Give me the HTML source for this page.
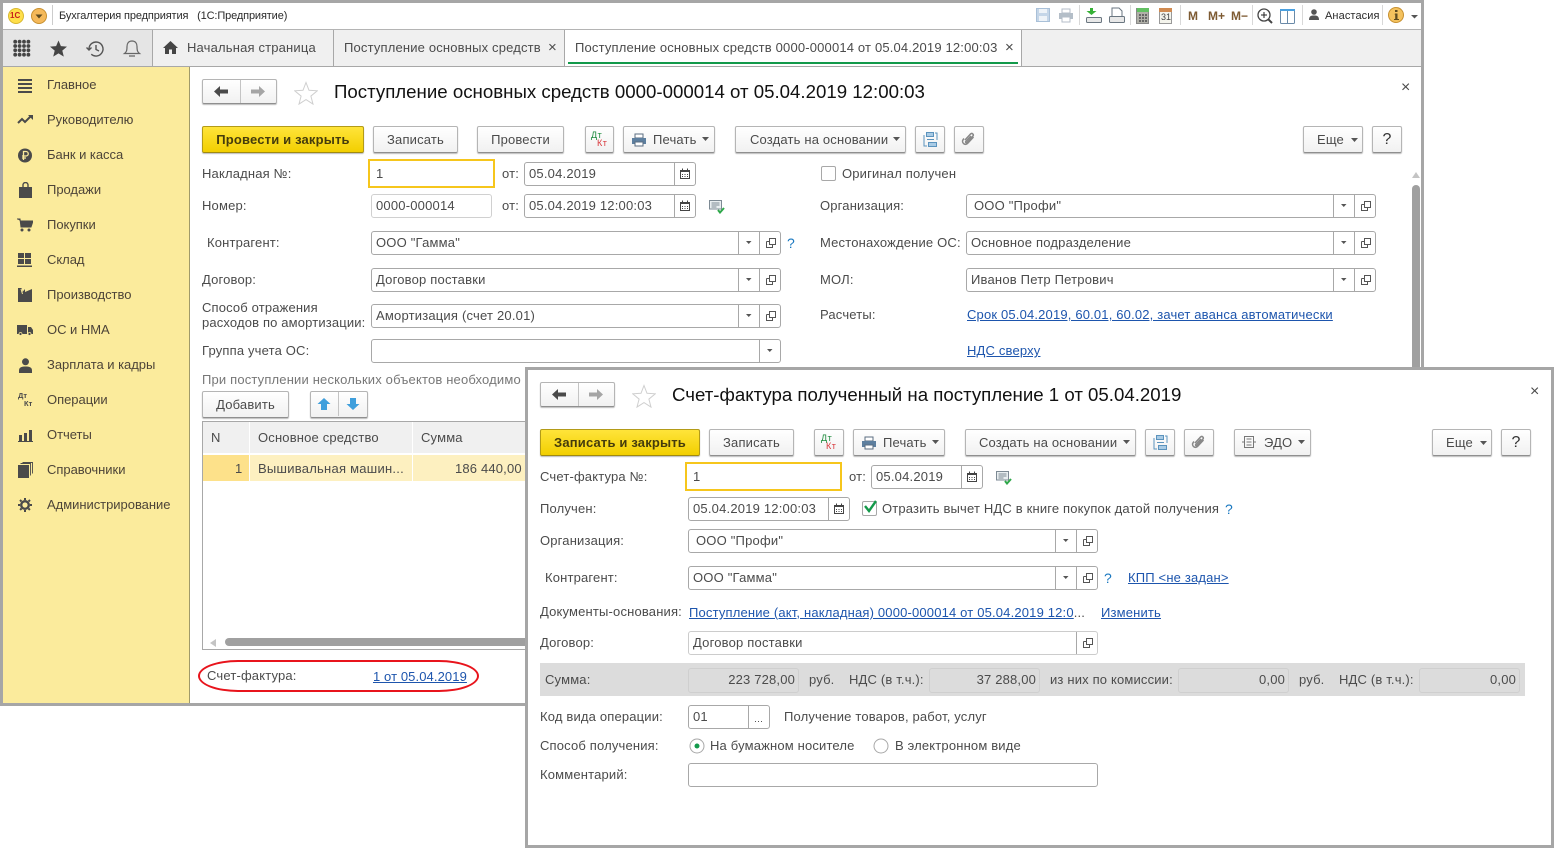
<!DOCTYPE html>
<html lang="ru"><head><meta charset="utf-8"><title>1С</title>
<style>
*{box-sizing:border-box}
html,body{margin:0;padding:0;background:#fff}
body{width:1554px;height:848px;position:relative;overflow:hidden;font:13px/16px "Liberation Sans",Arial,sans-serif;color:#4b4b4b;letter-spacing:.17px}
.a,.t,.b,.f,svg.i{position:absolute}
.t{white-space:nowrap;height:16px;line-height:16px;margin-top:1px}
.l{color:#1d55ad;text-decoration:underline}
.q{color:#1a78c0;font-weight:normal;font-size:14px}
.b{height:27px;border:1px solid #b5b5b5;border-bottom:1px solid #8f8f8f;border-radius:2px;background:linear-gradient(#fff,#f1f1f1);box-shadow:0 1px 1px #bbb;text-align:center;line-height:25px;white-space:nowrap;color:#4b4b4b}
.y{background:linear-gradient(#ffe43a,#f2cf00);border:1px solid #b39b18;border-bottom:1px solid #a08a10;font-weight:bold;color:#453c0c}
.f{height:24px;border:1px solid #a8a8a8;border-radius:3px;background:#fff;line-height:22px;padding-left:4px;white-space:nowrap;color:#4b4b4b;overflow:hidden;letter-spacing:.2px}
.f svg{position:absolute;top:0;right:0}
.g{height:25px;border:1px solid #cfcfcf;background:#dcdcdc;text-align:right;padding:0 3px 0 0;line-height:22px;letter-spacing:.17px}
.yf{border:2px solid #f6c61c;border-radius:0;height:29px;line-height:25px;padding-left:6px}
.s{width:15px;height:15px;border:1px solid #a8a8a8;border-radius:2px;background:#fff}
.m{position:absolute;left:47px;white-space:nowrap;height:16px;line-height:16px;color:#4d4438;letter-spacing:-.03px}
svg.n{position:absolute;left:17px}
.sep{position:absolute;width:1px;height:20px;top:5px;background:#d8d8d8}
.tb{font:11px/16px "Liberation Sans",sans-serif;letter-spacing:-.13px;color:#2a2a2a;margin-top:0}
.mm{font-weight:bold;color:#7d5a32;font-size:12px;letter-spacing:0;margin-top:0}
.h{height:24px;font-size:18.67px;line-height:24px;color:#111;letter-spacing:0;margin-top:0}
.dk{font-size:9px;letter-spacing:.5px;margin-top:0;height:10px;line-height:10px}
</style></head><body>
<svg width="0" height="0" style="position:absolute">
<defs>
<symbol id="ddo" viewBox="0 0 43 22"><path d="M1.500 0V22M22.500 0V22" stroke="#a8a8a8"/><path d="M9 9h5.500l-2.750 3z" fill="#555"/><path d="M29.500 9.500v6h6v-2.500M29.500 9.500H32M32.500 6.500h6v6h-6z" fill="none" stroke="#555"/></symbol>
<symbol id="dd" viewBox="0 0 22 22"><path d="M1.500 0V22" stroke="#a8a8a8"/><path d="M9 9h5.500l-2.750 3z" fill="#555"/></symbol>
<symbol id="o" viewBox="0 0 22 22"><path d="M1.500 0V22" stroke="#a8a8a8"/><path d="M8.500 9.500v6h6v-2.500M8.500 9.500H11M11.500 6.500h6v6h-6z" fill="none" stroke="#555"/></symbol>
<symbol id="cal" viewBox="0 0 22 22"><path d="M1.500 0V22" stroke="#a8a8a8"/><path d="M7.500 7.500h9v8h-9z" fill="#fff" stroke="#444"/><path d="M7 7h10v2H7zM9 5.500h1v2H9zM14 5.500h1v2h-1z" fill="#444"/><path d="M9 11h1v1H9zM11.500 11h1v1h-1zM14 11h1v1h-1zM9 13h1v1H9zM11.500 13h1v1h-1zM14 13h1v1h-1z" fill="#444"/></symbol>
<symbol id="star" viewBox="0 0 24 24"><path d="M12 1.500l3 7.800 8.300.5-6.400 5.300 2.100 8-7-4.500-7 4.500 2.100-8L.7 9.800 9 9.300z" fill="#fff" stroke="#cfcfcf"/></symbol>
<symbol id="note" viewBox="0 0 16 14"><path d="M.5.500h12v8.500h-12z" fill="#e9eef0" stroke="#7d8a94"/><path d="M2.500 3h8M2.500 5h8M2.500 7h5" stroke="#7d8a94"/><path d="M9 10l2 2.500 4-4.500" fill="none" stroke="#2fa84a" stroke-width="2"/></symbol>
<symbol id="al" viewBox="0 0 14 11"><path d="M6 0v3.500h8v4H6V11L0 5.500z" fill="#4a4a4a"/></symbol>
<symbol id="ar" viewBox="0 0 14 11"><path d="M8 0v3.500H0v4h8V11l6-5.500z" fill="#a5a5a5"/></symbol>
<symbol id="pr" viewBox="0 0 16 14"><path d="M4 1h8v4H4z" fill="#fff" stroke="#5b6d80"/><path d="M1 5h14v6H1z" fill="#5d7f9f"/><path d="M4 9h8v4H4z" fill="#fff" stroke="#5b6d80"/></symbol>
<symbol id="str" viewBox="0 0 15 15"><path d="M3.500 .5h7v4h-7zM5.500 10.500h8v4h-8z" fill="#a9cbe5" stroke="#5b93bd"/><path d="M1 3v11h3M14 8V1h-2M4 7.500h7" fill="none" stroke="#5b93bd"/></symbol>
<symbol id="clip" viewBox="0 0 16 16"><path d="M4 9l5.500-6c1.500-1.500 3.800.5 2.300 2.200L6 11.500c-.8.800-1.900-.2-1.200-1L10 5M3 7.500l-.8 1c-2.200 3 1.800 6.500 4.300 4l6-6.500" fill="none" stroke="#888" stroke-width="1.500"/></symbol>
</defs></svg>

<!-- main window -->
<div class="a" style="left:0;top:0;width:1424px;height:706px;border:3px solid #a6a6a6;background:#fff"></div>

<!-- title bar -->
<svg class="i" style="left:8px;top:8px" width="40" height="17" viewBox="0 0 40 17"><circle cx="8" cy="8" r="7.500" fill="#ffdf4a" stroke="#d8b830"/><circle cx="31" cy="8" r="7.500" fill="#f5b95a" stroke="#c79030"/><path d="M27.500 6.500h7L31 10.500z" fill="#5d4a20"/></svg>
<div class="t" style="left:10px;top:7px;font:bold 8px/16px 'Liberation Sans',sans-serif;color:#c8201c;letter-spacing:0">1С</div>
<div class="a" style="left:52px;top:5px;width:1px;height:20px;background:#ccc"></div>
<div class="t tb" style="left:59px;top:8px">Бухгалтерия предприятия &nbsp; (1С:Предприятие)</div>
<svg class="i" style="left:1034px;top:6px" width="272" height="20" viewBox="0 0 272 20">
<path d="M2.500 2.500h13v13h-13z" fill="#c5d6e8" stroke="#a9c0d8"/><path d="M5 3h8v4H5zM5 10h8v5H5z" fill="#eef3f8"/>
<path d="M28 3h8v4h-8z" fill="#fff" stroke="#b4bec8"/><rect x="25" y="7" width="14" height="6" fill="#b4bec8"/><path d="M28 11h8v5h-8z" fill="#fff" stroke="#b4bec8"/>
<path d="M56 2v3h-3.500l5 4 5-4H59V2z" fill="#35b035"/><rect x="52.500" y="11.500" width="15" height="5" rx="1" fill="#e8e8e8" stroke="#6a7680"/>
<path d="M78 2h7l3 3v6H78z" fill="#fff" stroke="#6a7680"/><rect x="75.500" y="10.500" width="15" height="6" rx="1" fill="#e8e8e8" stroke="#6a7680"/>
<rect x="102.500" y="2.500" width="12" height="15" fill="#b0b0a8" stroke="#888"/><rect x="103" y="2" width="12" height="4" fill="#62c062"/><path d="M105 8h2v2h-2zM108 8h2v2h-2zM111 8h2v2h-2zM105 11h2v2h-2zM108 11h2v2h-2zM111 11h2v2h-2zM105 14h2v2h-2zM108 14h2v2h-2zM111 14h2v2h-2z" fill="#666"/>
<rect x="125.500" y="2.500" width="12" height="15" fill="#f4f4ec" stroke="#999"/><rect x="125" y="2" width="13" height="4" fill="#d08a50"/>
<circle cx="230" cy="9" r="6" fill="#fff" stroke="#444" stroke-width="1.300"/><path d="M227 9h6M230 6v6" stroke="#222"/><path d="M234.500 13.500l3.500 3.500" stroke="#444" stroke-width="2"/>
<rect x="246.500" y="3.500" width="14" height="14" rx="1" fill="#fff" stroke="#6a8aa8"/><rect x="246" y="3" width="15" height="2" fill="#4aa0e0"/><path d="M253.500 5v12" stroke="#6a8aa8"/>
</svg>
<div class="t" style="left:1161px;top:8px;font-size:9px;letter-spacing:0;color:#444">31</div>
<div class="sep" style="left:1079px"></div><div class="sep" style="left:1130px"></div><div class="sep" style="left:1180px"></div><div class="sep" style="left:1252px"></div><div class="sep" style="left:1302px"></div><div class="sep" style="left:1382px"></div>
<div class="t mm" style="left:1188px;top:8px">M</div><div class="t mm" style="left:1208px;top:8px">M+</div><div class="t mm" style="left:1231px;top:8px">M−</div>
<svg class="i" style="left:1309px;top:9px" width="10" height="11" viewBox="0 0 10 11"><circle cx="5" cy="3" r="2.800" fill="#555"/><path d="M0 11c0-4 2-4.500 5-4.500s5 .5 5 4.500z" fill="#555"/></svg>
<div class="t tb" style="left:1325px;top:8px;letter-spacing:.1px">Анастасия</div>
<svg class="i" style="left:1388px;top:7px" width="32" height="17" viewBox="0 0 32 17"><circle cx="8" cy="8" r="7.500" fill="#f4c25e" stroke="#c79030"/><path d="M7 3h2.500v2H7zM7 6.500h2.500V12H11v1H6v-1h1.200V7.500H6.500z" fill="#5d4a20"/><path d="M23 8h7l-3.500 3.500z" fill="#555"/></svg>

<!-- tab bar -->
<div class="a" style="left:3px;top:29px;width:1418px;height:38px;background:#f0f0f0;border-top:1px solid #b4b4b4;border-bottom:1px solid #a8a8a8"></div>
<div class="a" style="left:3px;top:30px;width:150px;height:36px;background:#e5e5e5;border-right:1px solid #a8a8a8"></div>
<svg class="i" style="left:12px;top:38px" width="132" height="20" viewBox="0 0 132 20">
<g fill="#454545"><circle cx="3.200" cy="3.700" r="1.900"/><circle cx="7.600" cy="3.700" r="1.900"/><circle cx="12" cy="3.700" r="1.900"/><circle cx="16.400" cy="3.700" r="1.900"/><circle cx="3.200" cy="8" r="1.900"/><circle cx="7.600" cy="8" r="1.900"/><circle cx="12" cy="8" r="1.900"/><circle cx="16.400" cy="8" r="1.900"/><circle cx="3.200" cy="12.300" r="1.900"/><circle cx="7.600" cy="12.300" r="1.900"/><circle cx="12" cy="12.300" r="1.900"/><circle cx="16.400" cy="12.300" r="1.900"/><circle cx="3.200" cy="16.700" r="1.900"/><circle cx="7.600" cy="16.700" r="1.900"/><circle cx="12" cy="16.700" r="1.900"/><circle cx="16.400" cy="16.700" r="1.900"/></g>
<path d="M46.500 2.500l2.400 5.600 6.100.5-4.700 4 1.500 6-5.300-3.200-5.300 3.200 1.500-6-4.700-4 6.100-.5z" fill="#454545"/>
<path d="M77 11a7 7 0 1 1 2.300 5.200M74.500 9.500L77 12l2.500-2.500M84 7v4.500l3 1.500" fill="none" stroke="#555" stroke-width="1.400"/>
<path d="M112.500 15.500c2-1.500 2.500-3 2.500-7 0-3 1.500-5.500 5-5.500s5 2.500 5 5.500c0 4 .5 5.500 2.500 7zM117 18h6" fill="#e5e5e5" stroke="#666" stroke-width="1.200"/></svg>
<svg class="i" style="left:163px;top:41px" width="15" height="13" viewBox="0 0 15 13"><path d="M7.500 0L15 7h-2v6H9V8.500H6V13H2V7H0z" fill="#454545"/></svg>
<div class="t" style="left:187px;top:39px">Начальная страница</div>
<div class="a" style="left:333px;top:30px;width:1px;height:36px;background:#a8a8a8"></div>
<div class="t" style="left:344px;top:39px">Поступление основных средств</div>
<div class="t" style="left:548px;top:39px;font-size:15px">×</div>
<div class="a" style="left:564px;top:30px;width:458px;height:36px;background:#fff;border-left:1px solid #a8a8a8;border-right:1px solid #a8a8a8"></div>
<div class="t" style="left:575px;top:39px">Поступление основных средств 0000-000014 от 05.04.2019 12:00:03</div>
<div class="t" style="left:1005px;top:39px;font-size:15px">×</div>
<div class="a" style="left:568px;top:62px;width:450px;height:2px;background:#139a4b"></div>

<!-- sidebar -->
<div class="a" style="left:3px;top:67px;width:187px;height:636px;background:#fbeb9c;border-right:1px solid #a09a6a"></div>
<svg class="n" style="top:78px" width="16" height="15" viewBox="0 0 16 15"><path d="M1 2h14M1 6h14M1 10h14M1 14h14" stroke="#4a4a4a" stroke-width="2"/></svg>
<div class="m" style="top:77px">Главное</div>
<svg class="n" style="top:114px" width="17" height="11" viewBox="0 0 17 11"><path d="M1 9l4-4 3 3 6-6" fill="none" stroke="#4a4a4a" stroke-width="2"/><path d="M11 1h5v5z" fill="#4a4a4a"/></svg>
<div class="m" style="top:112px">Руководителю</div>
<svg class="n" style="top:148px" width="16" height="15" viewBox="0 0 16 15"><circle cx="8" cy="7.500" r="7" fill="#4a4a4a"/><path d="M6.500 12V3.500H9a2 2 0 0 1 0 4.500H5M5 10h4" fill="none" stroke="#fbeb9c" stroke-width="1.300"/></svg>
<div class="m" style="top:147px">Банк и касса</div>
<svg class="n" style="left:19px;top:182px" width="13" height="16" viewBox="0 0 13 16"><path d="M0 5h13v11H0z" fill="#4a4a4a"/><path d="M4 6V3a2.500 2.500 0 0 1 5 0v3" fill="none" stroke="#4a4a4a" stroke-width="1.400"/></svg>
<div class="m" style="top:182px">Продажи</div>
<svg class="n" style="top:218px" width="16" height="14" viewBox="0 0 16 14"><path d="M0 1h3l1 8h10l2-6H3.500" fill="#4a4a4a" stroke="#4a4a4a"/><circle cx="5" cy="12" r="1.500" fill="#4a4a4a"/><circle cx="12" cy="12" r="1.500" fill="#4a4a4a"/></svg>
<div class="m" style="top:217px">Покупки</div>
<svg class="n" style="top:253px" width="15" height="14" viewBox="0 0 15 14"><path d="M1 0h6v5H1zM8 0h6v5H8zM1 6h6v5H1zM8 6h6v5H8zM0 12.500h15V14H0z" fill="#4a4a4a"/></svg>
<div class="m" style="top:252px">Склад</div>
<svg class="n" style="left:18px;top:288px" width="15" height="14" viewBox="0 0 15 14"><path d="M0 14V0h3.500l1 4 2.500-3v3l7-3V14z" fill="#4a4a4a"/><path d="M3 1L4.500 6" stroke="#fbeb9c"/></svg>
<div class="m" style="top:287px">Производство</div>
<svg class="n" style="top:324px" width="16" height="12" viewBox="0 0 16 12"><path d="M0 1h10v9H0zM11 3h3l2 3v4h-5z" fill="#4a4a4a"/><circle cx="3.500" cy="10" r="1.500" fill="#4a4a4a" stroke="#fbeb9c" stroke-width=".7"/><circle cx="12.500" cy="10" r="1.500" fill="#4a4a4a" stroke="#fbeb9c" stroke-width=".7"/></svg>
<div class="m" style="top:322px">ОС и НМА</div>
<svg class="n" style="left:19px;top:358px" width="13" height="15" viewBox="0 0 13 15"><circle cx="6.500" cy="3.800" r="3.500" fill="#4a4a4a"/><path d="M0 15v-2.500C0 9 3 8.500 6.500 8.500S13 9 13 12.500V15z" fill="#4a4a4a"/></svg>
<div class="m" style="top:357px">Зарплата и кадры</div>
<div class="t" style="left:18px;top:390px;font:bold 7.500px/10px 'Liberation Sans',sans-serif;color:#4a4a4a;letter-spacing:0;height:10px">Дт</div>
<div class="t" style="left:24px;top:398px;font:bold 7.500px/10px 'Liberation Sans',sans-serif;color:#4a4a4a;letter-spacing:0;height:10px">Кт</div>
<div class="m" style="top:392px">Операции</div>
<svg class="n" style="left:18px;top:430px" width="15" height="12" viewBox="0 0 15 12"><path d="M1 5h3v6H1zM6 3h3v8H6zM11 0h3v11h-3zM0 11h15v1H0z" fill="#4a4a4a"/></svg>
<div class="m" style="top:427px">Отчеты</div>
<svg class="n" style="left:18px;top:462px" width="15" height="16" viewBox="0 0 15 16"><path d="M0 3h11v13H0z" fill="#4a4a4a"/><path d="M2.500 1.500h10v12M4.500.5h10v11" fill="none" stroke="#4a4a4a" stroke-width=".9"/></svg>
<div class="m" style="top:462px">Справочники</div>
<svg class="n" style="left:18px;top:498px" width="14" height="14" viewBox="0 0 14 14"><circle cx="7" cy="7" r="3.800" fill="none" stroke="#4a4a4a" stroke-width="2.400"/><path d="M7 0v14M0 7h14M2 2l10 10M12 2L2 12" stroke="#4a4a4a" stroke-width="2" stroke-dasharray="2 10"/></svg>
<div class="m" style="top:497px">Администрирование</div>

<!-- form 1 -->
<div class="b" style="left:202px;top:79px;width:75px;height:25px"></div><div class="a" style="left:240px;top:80px;width:1px;height:23px;background:#c4c4c4"></div>
<svg class="i" style="left:214px;top:86px" width="14" height="11"><use href="#al"/></svg><svg class="i" style="left:251px;top:86px" width="14" height="11"><use href="#ar"/></svg>
<svg class="i" style="left:294px;top:81px" width="24" height="24"><use href="#star"/></svg>
<div class="t h" style="left:334px;top:80px">Поступление основных средств 0000-000014 от 05.04.2019 12:00:03</div>
<div class="t" style="left:1401px;top:79px;font-size:16px">×</div>

<div class="b y" style="left:202px;top:126px;width:162px">Провести и закрыть</div>
<div class="b" style="left:373px;top:126px;width:85px">Записать</div>
<div class="b" style="left:477px;top:126px;width:87px">Провести</div>
<div class="b" style="left:585px;top:126px;width:29px"></div>
<div class="t dk" style="left:591px;top:130px;color:#1c8a3c">Дт</div><div class="t dk" style="left:597px;top:138px;color:#d8383c">Кт</div>
<div class="b" style="left:623px;top:126px;width:92px;text-align:left;padding-left:29px">Печать</div>
<svg class="i" style="left:631px;top:133px" width="16" height="14"><use href="#pr"/></svg><svg class="i" style="left:702px;top:137px" width="7" height="4"><path d="M0 0h7L3.500 4z" fill="#555"/></svg>
<div class="b" style="left:735px;top:126px;width:171px;text-align:left;padding-left:14px">Создать на основании</div><svg class="i" style="left:893px;top:137px" width="7" height="4"><path d="M0 0h7L3.500 4z" fill="#555"/></svg>
<div class="b" style="left:915px;top:126px;width:30px"></div><svg class="i" style="left:923px;top:132px" width="15" height="15"><use href="#str"/></svg>
<div class="b" style="left:954px;top:126px;width:30px"></div><svg class="i" style="left:961px;top:131px" width="16" height="16"><use href="#clip"/></svg>
<div class="b" style="left:1303px;top:126px;width:60px;text-align:left;padding-left:13px">Еще</div><svg class="i" style="left:1351px;top:138px" width="7" height="4"><path d="M0 0h7L3.500 4z" fill="#555"/></svg>
<div class="b" style="left:1372px;top:126px;width:30px;font-size:16px;color:#333">?</div>

<div class="t" style="left:202px;top:165px">Накладная №:</div>
<div class="f yf" style="left:368px;top:159px;width:127px">1</div>
<div class="t" style="left:502px;top:165px">от:</div>
<div class="f" style="left:524px;top:162px;width:172px">05.04.2019<svg width="22" height="22"><use href="#cal"/></svg></div>
<div class="a s" style="left:821px;top:166px"></div>
<div class="t" style="left:842px;top:165px">Оригинал получен</div>

<div class="t" style="left:202px;top:197px">Номер:</div>
<div class="f" style="left:371px;top:194px;width:121px;border-color:#d0d0d0">0000-000014</div>
<div class="t" style="left:502px;top:197px">от:</div>
<div class="f" style="left:524px;top:194px;width:172px">05.04.2019 12:00:03<svg width="22" height="22"><use href="#cal"/></svg></div>
<svg class="i" style="left:709px;top:200px" width="16" height="14"><use href="#note"/></svg>
<div class="t" style="left:820px;top:197px">Организация:</div>
<div class="f" style="left:966px;top:194px;width:410px;padding-left:7px">ООО "Профи"<svg width="43" height="22"><use href="#ddo"/></svg></div>

<div class="t" style="left:207px;top:234px">Контрагент:</div>
<div class="f" style="left:371px;top:231px;width:410px">ООО "Гамма"<svg width="43" height="22"><use href="#ddo"/></svg></div>
<div class="t q" style="left:787px;top:234px">?</div>
<div class="t" style="left:820px;top:234px">Местонахождение ОС:</div>
<div class="f" style="left:966px;top:231px;width:410px">Основное подразделение<svg width="43" height="22"><use href="#ddo"/></svg></div>

<div class="t" style="left:202px;top:271px">Договор:</div>
<div class="f" style="left:371px;top:268px;width:410px">Договор поставки<svg width="43" height="22"><use href="#ddo"/></svg></div>
<div class="t" style="left:820px;top:271px">МОЛ:</div>
<div class="f" style="left:966px;top:268px;width:410px">Иванов Петр Петрович<svg width="43" height="22"><use href="#ddo"/></svg></div>

<div class="t" style="left:202px;top:299px;letter-spacing:.15px">Способ отражения</div>
<div class="t" style="left:202px;top:314px;letter-spacing:.15px">расходов по амортизации:</div>
<div class="f" style="left:371px;top:304px;width:410px">Амортизация (счет 20.01)<svg width="43" height="22"><use href="#ddo"/></svg></div>
<div class="t" style="left:820px;top:306px">Расчеты:</div>
<div class="t l" style="left:967px;top:306px">Срок 05.04.2019, 60.01, 60.02, зачет аванса автоматически</div>

<div class="t" style="left:202px;top:342px">Группа учета ОС:</div>
<div class="f" style="left:371px;top:339px;width:410px"><svg width="22" height="22"><use href="#dd"/></svg></div>
<div class="t l" style="left:967px;top:342px">НДС сверху</div>

<div class="t" style="left:202px;top:371px;color:#777;width:322px;overflow:hidden">При поступлении нескольких объектов необходимо</div>
<div class="b" style="left:202px;top:391px;width:87px">Добавить</div>
<div class="b" style="left:310px;top:391px;width:58px"></div><div class="a" style="left:338px;top:392px;width:1px;height:24px;background:#c4c4c4"></div>
<svg class="i" style="left:317px;top:398px" width="14" height="12" viewBox="0 0 14 12"><path d="M7 0l6.500 6H10v6H4V6H.5z" fill="#3f9fdc"/></svg>
<svg class="i" style="left:346px;top:398px" width="14" height="12" viewBox="0 0 14 12"><path d="M7 12l6.500-6H10V0H4v6H.5z" fill="#3f9fdc"/></svg>

<div class="a" style="left:202px;top:421px;width:324px;height:229px;border:1px solid #a8a8a8;border-right:0;background:#fff"></div>
<div class="a" style="left:203px;top:422px;width:323px;height:31px;background:#f0f0f0"></div>
<div class="a" style="left:249px;top:422px;width:1px;height:60px;background:#fff"></div><div class="a" style="left:412px;top:422px;width:1px;height:60px;background:#fff"></div>
<div class="t" style="left:211px;top:429px">N</div><div class="t" style="left:258px;top:429px">Основное средство</div><div class="t" style="left:421px;top:429px">Сумма</div>
<div class="a" style="left:203px;top:455px;width:46px;height:26px;background:#fde18a"></div>
<div class="a" style="left:250px;top:455px;width:162px;height:26px;background:#fdf0c0"></div>
<div class="a" style="left:413px;top:455px;width:113px;height:26px;background:#fdf0c0"></div>
<div class="t" style="left:235px;top:460px">1</div><div class="t" style="left:258px;top:460px;letter-spacing:.25px">Вышивальная машин...</div><div class="t" style="left:455px;top:460px">186 440,00</div>
<svg class="i" style="left:210px;top:639px" width="6" height="8"><path d="M6 0v8L0 4z" fill="#c4c4c4"/></svg>
<div class="a" style="left:225px;top:638px;width:301px;height:8px;background:#a0a0a0;border-radius:4px 0 0 4px"></div>

<div class="t" style="left:207px;top:667px">Счет-фактура:</div>
<div class="t l" style="left:373px;top:668px;letter-spacing:.1px">1 от 05.04.2019</div>
<div class="a" style="left:198px;top:660px;width:281px;height:32px;border:2px solid #e8141c;border-radius:40px/16px"></div>

<svg class="i" style="left:1412px;top:172px" width="8" height="6"><path d="M0 6h8L4 0z" fill="#c4c4c4"/></svg>
<div class="a" style="left:1412px;top:185px;width:8px;height:190px;background:#a0a0a0;border-radius:4px 4px 0 0"></div>

<!-- form 2 -->
<div class="a" style="left:525px;top:367px;width:1029px;height:481px;border:3px solid #a6a6a6;background:#fff"></div>
<div class="b" style="left:540px;top:382px;width:75px;height:25px"></div><div class="a" style="left:578px;top:383px;width:1px;height:23px;background:#c4c4c4"></div>
<svg class="i" style="left:552px;top:389px" width="14" height="11"><use href="#al"/></svg><svg class="i" style="left:589px;top:389px" width="14" height="11"><use href="#ar"/></svg>
<svg class="i" style="left:632px;top:384px" width="24" height="24"><use href="#star"/></svg>
<div class="t h" style="left:672px;top:383px">Счет-фактура полученный на поступление 1 от 05.04.2019</div>
<div class="t" style="left:1530px;top:383px;font-size:16px">×</div>

<div class="b y" style="left:540px;top:429px;width:160px">Записать и закрыть</div>
<div class="b" style="left:709px;top:429px;width:85px">Записать</div>
<div class="b" style="left:814px;top:429px;width:30px"></div>
<div class="t dk" style="left:821px;top:433px;color:#1c8a3c">Дт</div><div class="t dk" style="left:826px;top:441px;color:#d8383c">Кт</div>
<div class="b" style="left:853px;top:429px;width:92px;text-align:left;padding-left:29px">Печать</div>
<svg class="i" style="left:861px;top:436px" width="16" height="14"><use href="#pr"/></svg><svg class="i" style="left:932px;top:440px" width="7" height="4"><path d="M0 0h7L3.500 4z" fill="#555"/></svg>
<div class="b" style="left:965px;top:429px;width:171px;text-align:left;padding-left:13px">Создать на основании</div><svg class="i" style="left:1123px;top:440px" width="7" height="4"><path d="M0 0h7L3.500 4z" fill="#555"/></svg>
<div class="b" style="left:1145px;top:429px;width:30px"></div><svg class="i" style="left:1153px;top:435px" width="15" height="15"><use href="#str"/></svg>
<div class="b" style="left:1184px;top:429px;width:30px"></div><svg class="i" style="left:1191px;top:434px" width="16" height="16"><use href="#clip"/></svg>
<div class="b" style="left:1234px;top:429px;width:77px;text-align:left;padding-left:29px">ЭДО</div>
<svg class="i" style="left:1241px;top:434px" width="16" height="16" viewBox="0 0 16 16"><path d="M3.500 2.500h9v11h-9zM5.500 5h5M5.500 8h5M5.500 11h5M1 8h2M13 8h2" fill="none" stroke="#777"/></svg>
<svg class="i" style="left:1298px;top:440px" width="7" height="4"><path d="M0 0h7L3.500 4z" fill="#555"/></svg>
<div class="b" style="left:1432px;top:429px;width:60px;text-align:left;padding-left:13px">Еще</div><svg class="i" style="left:1480px;top:441px" width="7" height="4"><path d="M0 0h7L3.500 4z" fill="#555"/></svg>
<div class="b" style="left:1501px;top:429px;width:30px;font-size:16px;color:#333">?</div>

<div class="t" style="left:540px;top:468px">Счет-фактура №:</div>
<div class="f yf" style="left:685px;top:462px;width:157px">1</div>
<div class="t" style="left:849px;top:468px">от:</div>
<div class="f" style="left:871px;top:465px;width:112px">05.04.2019<svg width="22" height="22"><use href="#cal"/></svg></div>
<svg class="i" style="left:996px;top:471px" width="16" height="14"><use href="#note"/></svg>

<div class="t" style="left:540px;top:500px">Получен:</div>
<div class="f" style="left:688px;top:497px;width:162px">05.04.2019 12:00:03<svg width="22" height="22"><use href="#cal"/></svg></div>
<div class="a s" style="left:862px;top:501px"></div>
<svg class="i" style="left:863px;top:499px" width="15" height="14" viewBox="0 0 15 14"><path d="M2 7l4 5 7-10" fill="none" stroke="#14994a" stroke-width="2.400"/></svg>
<div class="t" style="left:882px;top:500px">Отразить вычет НДС в книге покупок датой получения</div>
<div class="t q" style="left:1225px;top:500px">?</div>

<div class="t" style="left:540px;top:532px">Организация:</div>
<div class="f" style="left:688px;top:529px;width:410px;padding-left:7px">ООО "Профи"<svg width="43" height="22"><use href="#ddo"/></svg></div>

<div class="t" style="left:545px;top:569px">Контрагент:</div>
<div class="f" style="left:688px;top:566px;width:410px">ООО "Гамма"<svg width="43" height="22"><use href="#ddo"/></svg></div>
<div class="t q" style="left:1104px;top:569px">?</div>
<div class="t l" style="left:1128px;top:569px">КПП &lt;не задан&gt;</div>

<div class="t" style="left:540px;top:603px">Документы-основания:</div>
<div class="t" style="left:689px;top:604px"><span class="l">Поступление (акт, накладная) 0000-000014 от 05.04.2019 12:0</span>...</div>
<div class="t l" style="left:1101px;top:604px">Изменить</div>

<div class="t" style="left:540px;top:634px">Договор:</div>
<div class="f" style="left:688px;top:631px;width:410px;border-color:#ccc">Договор поставки<svg width="22" height="22"><use href="#o"/></svg></div>

<div class="a" style="left:540px;top:663px;width:985px;height:33px;background:#dcdcdc"></div>
<div class="t" style="left:545px;top:671px">Сумма:</div>
<div class="f g" style="left:688px;top:668px;width:111px">223 728,00</div>
<div class="t" style="left:809px;top:671px">руб.</div>
<div class="t" style="left:849px;top:671px">НДС (в т.ч.):</div>
<div class="f g" style="left:929px;top:668px;width:111px">37 288,00</div>
<div class="t" style="left:1050px;top:671px">из них по комиссии:</div>
<div class="f g" style="left:1178px;top:668px;width:111px">0,00</div>
<div class="t" style="left:1299px;top:671px">руб.</div>
<div class="t" style="left:1339px;top:671px">НДС (в т.ч.):</div>
<div class="f g" style="left:1419px;top:668px;width:101px">0,00</div>

<div class="t" style="left:540px;top:708px">Код вида операции:</div>
<div class="f" style="left:688px;top:705px;width:82px">01<svg width="22" height="22"><path d="M1.500 0V22" stroke="#a8a8a8"/><path d="M8 15h1v1H8zM11 15h1v1h-1zM14 15h1v1h-1z" fill="#555"/></svg></div>
<div class="t" style="left:784px;top:708px">Получение товаров, работ, услуг</div>

<div class="t" style="left:540px;top:737px">Способ получения:</div>
<svg class="i" style="left:689px;top:738px" width="16" height="16" viewBox="0 0 16 16"><circle cx="8" cy="8" r="7" fill="#fff" stroke="#a8a8a8"/><circle cx="8" cy="8" r="2.500" fill="#139a4b"/></svg>
<div class="t" style="left:710px;top:737px">На бумажном носителе</div>
<svg class="i" style="left:873px;top:738px" width="16" height="16" viewBox="0 0 16 16"><circle cx="8" cy="8" r="7" fill="#fff" stroke="#a8a8a8"/></svg>
<div class="t" style="left:895px;top:737px">В электронном виде</div>

<div class="t" style="left:540px;top:766px">Комментарий:</div>
<div class="f" style="left:688px;top:763px;width:410px"></div>
</body></html>
